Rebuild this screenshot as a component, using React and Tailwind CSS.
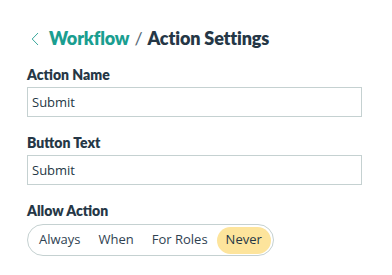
const options = ['Always', 'When', 'For Roles', 'Never'];

export default function App() {
  const selected = 'Never';

  return (
    <div className="w-[392px] h-[275px] bg-white pl-[27px] pt-[27px] font-['Lato','Open_Sans',sans-serif] text-[#253746]">
      {/* Header */}
      <div className="flex items-center h-[22px]">
        <svg width="8" height="14" viewBox="0 0 8 14" className="ml-[4px] mr-[10px] mt-[1px]">
          <polyline points="7,1 1.2,7 7,13" fill="none" stroke="#3aa89c" strokeWidth="1" />
        </svg>
        <h1 className="text-[18px] font-extrabold tracking-[-0.15px]">
          <span className="text-[#1a9e90]">Workflow</span>
          <span className="font-normal text-[#5a6b78] mx-[5px]">/</span>
          <span>Action Settings</span>
        </h1>
      </div>

      <div className="w-[335px] mt-[17px]">
        <Field label="Action Name" value="Submit" />
        <Field label="Button Text" value="Submit" />

        <label className="block text-[14px] font-extrabold leading-[18px] mb-[4px]">Allow Action</label>
        <div className="inline-flex items-center h-[32px] rounded-full border border-[#c5d1d1] px-[2px] font-['Open_Sans',sans-serif] text-[13px]">
          {options.map((opt) => (
            <button
              key={opt}
              className={`h-[27px] rounded-full px-[9px] ${opt === selected ? 'bg-[#fde49c] text-[#253746]' : 'text-[#2f4252]'}`}
            >
              {opt}
            </button>
          ))}
        </div>
      </div>
    </div>
  );
}

function Field({ label, value }) {
  return (
    <div className="mb-[17px]">
      <label className="block text-[14px] font-extrabold leading-[18px] mb-[3px]">{label}</label>
      <input
        readOnly
        value={value}
        className="w-full h-[30px] border border-[#c5d1d1] px-[4px] font-['Open_Sans',sans-serif] text-[13px] text-[#253746] outline-none"
      />
    </div>
  );
}
